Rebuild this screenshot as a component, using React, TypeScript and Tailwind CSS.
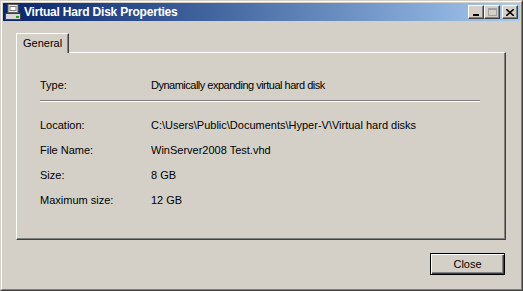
import React from "react";

const rows = [
  { label: "Location:", value: "C:\\Users\\Public\\Documents\\Hyper-V\\Virtual hard disks" },
  { label: "File Name:", value: "WinServer2008 Test.vhd" },
  { label: "Size:", value: "8 GB" },
  { label: "Maximum size:", value: "12 GB" },
];

const CaptionButton = ({ children }: { children: React.ReactNode }) => (
  <div className="flex h-[14px] w-[16px] items-center justify-center bg-[#d4d0c8] border border-t-white border-l-white border-r-[#404040] border-b-[#404040] shadow-[inset_-1px_-1px_0_#808080]">
    {children}
  </div>
);

const DiskIcon = () => (
  <svg width="16" height="16" viewBox="0 0 16 16">
    <rect x="3" y="0.5" width="10" height="8" fill="#e8e8e8" stroke="#606060" />
    <rect x="5" y="2.5" width="6" height="4" fill="#ffffff" stroke="#808080" />
    <rect x="0.5" y="9.5" width="15" height="6" fill="#d8d8d8" stroke="#404040" />
    <rect x="11" y="12" width="3" height="2" fill="#2e9a2e" />
  </svg>
);

export default function App() {
  return (
    <div className="h-[291px] w-[523px] overflow-hidden bg-[#d4d0c8] font-['Liberation_Sans',Arial,sans-serif] text-[11px] text-black">
      <div className="flex h-full w-full flex-col border border-t-[#d4d0c8] border-l-[#d4d0c8] border-r-[#404040] border-b-[#404040]">
        <div className="flex h-full flex-col border border-t-white border-l-white border-r-[#808080] border-b-[#808080] p-[1px]">
          {/* title bar */}
          <div className="flex h-[18px] items-center bg-gradient-to-r from-[#0a246a] to-[#a6caf0] pl-[2px] pr-[2px]">
            <DiskIcon />
            <span className="ml-[3px] text-[12px] font-bold tracking-[-0.2px] text-white">Virtual Hard Disk Properties</span>
            <div className="ml-auto flex items-center">
              <CaptionButton>
                <div className="mt-[6px] h-[2px] w-[6px] bg-black" />
              </CaptionButton>
              <CaptionButton>
                <div className="h-[8px] w-[9px] border border-t-2 border-[#a0a0a0]" />
              </CaptionButton>
              <div className="ml-[2px]">
                <CaptionButton>
                  <svg width="8" height="7" viewBox="0 0 8 7">
                    <path d="M0 0 L8 7 M8 0 L0 7" stroke="black" strokeWidth="1.6" />
                  </svg>
                </CaptionButton>
              </div>
            </div>
          </div>

          {/* content */}
          <div className="flex flex-1 flex-col pl-[13px] pr-[14px] pt-[12px]">
            <div className="flex">
              <div className="relative z-10 -mb-[1px] flex h-[20px] items-center border border-b-0 border-t-white border-l-white border-r-[#404040] bg-[#d4d0c8] px-[6px] shadow-[inset_-1px_0_0_#808080]">
                General
              </div>
            </div>
            <div className="h-[188px] border border-t-white border-l-white border-r-[#404040] border-b-[#404040] shadow-[inset_-1px_-1px_0_#808080] pl-[23px] pr-[25px] pt-[25px]">
              <div className="flex h-[14px] items-center">
                <span className="w-[111px]">Type:</span>
                <span className="tracking-[-0.5px]">Dynamically expanding virtual hard disk</span>
              </div>
              <div className="mt-[8px] h-[2px] border-t border-b border-t-[#808080] border-b-white" />
              <div className="mt-[16px] flex flex-col gap-[11px]">
                {rows.map((r) => (
                  <div key={r.label} className="flex h-[14px] items-center">
                    <span className="w-[111px]">{r.label}</span>
                    <span>{r.value}</span>
                  </div>
                ))}
              </div>
            </div>
            <div className="mt-[13px] flex justify-end pr-[1px]">
              <button className="h-[22px] w-[75px] border border-black bg-[#d4d0c8] shadow-[inset_1px_1px_0_#fff,inset_-1px_-1px_0_#404040,inset_-2px_-2px_0_#808080]">
                Close
              </button>
            </div>
          </div>
        </div>
      </div>
    </div>
  );
}
